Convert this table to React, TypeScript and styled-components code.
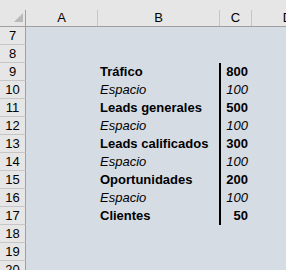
import styled, { createGlobalStyle } from "styled-components";

const GlobalStyle = createGlobalStyle`
  html, body {
    margin: 0;
    padding: 0;
    background: #d6dce4;
    overflow: hidden;
  }
  body {
    font-family: "Liberation Sans", Arial, sans-serif;
  }
`;

const Sheet = styled.div`
  display: grid;
  grid-template-columns: 26px 72px 122px 32px 72px;
  grid-template-rows: 27px;
  grid-auto-rows: 18px;
  width: 286px;
  height: 270px;
  overflow: hidden;
  background: #d6dce4;
  color: #000;
  font-size: 13px;
`;

const HeaderCell = styled.div`
  display: flex;
  align-items: flex-end;
  background: #e6e6e6;
  border-bottom: 1px solid #9f9f9f;
  padding-top: 10px;
`;

const HeaderLabel = styled.div<{ $last?: boolean; $dark?: boolean }>`
  flex: 1;
  height: 16px;
  line-height: 16px;
  text-align: center;
  border-right: 1px solid ${(p) => (p.$dark ? "#9f9f9f" : p.$last ? "transparent" : "#c6c6c6")};
  display: flex;
  align-items: center;
  justify-content: center;
`;

const CornerTriangle = styled.div`
  width: 0;
  height: 0;
  border-left: 9px solid transparent;
  border-bottom: 9px solid #b9b9b9;
  margin: 3px 2px 0 auto;
  align-self: flex-start;
`;

const RowHeader = styled.div`
  background: #e6e6e6;
  border-right: 1px solid #9f9f9f;
  border-bottom: 1px solid #c6c6c6;
  text-align: center;
  line-height: 17px;
`;

const Cell = styled.div<{ $bold?: boolean; $italic?: boolean; $num?: boolean; $edge?: boolean }>`
  line-height: 17px;
  white-space: nowrap;
  overflow: visible;
  font-weight: ${(p) => (p.$bold ? 700 : 400)};
  font-style: ${(p) => (p.$italic ? "italic" : "normal")};
  text-align: ${(p) => (p.$num ? "right" : "left")};
  padding: ${(p) => (p.$num ? "0 3px 0 0" : "0 0 0 2px")};
  border-right: 2px solid ${(p) => (p.$edge ? "#000" : "transparent")};
  margin-right: -1px;
`;

type Row = { label: string; value: string; bold: boolean };

const funnel: Row[] = [
  { label: "Tráfico", value: "800", bold: true },
  { label: "Espacio", value: "100", bold: false },
  { label: "Leads generales", value: "500", bold: true },
  { label: "Espacio", value: "100", bold: false },
  { label: "Leads calificados", value: "300", bold: true },
  { label: "Espacio", value: "100", bold: false },
  { label: "Oportunidades", value: "200", bold: true },
  { label: "Espacio", value: "100", bold: false },
  { label: "Clientes", value: "50", bold: true },
];

const rowNumbers = Array.from({ length: 14 }, (_, i) => i + 7);

const App = () => {
  return (
    <>
      <GlobalStyle />
      <Sheet>
        <HeaderCell>
          <HeaderLabel $dark>
            <CornerTriangle />
          </HeaderLabel>
        </HeaderCell>
        <HeaderCell>
          <HeaderLabel>A</HeaderLabel>
        </HeaderCell>
        <HeaderCell>
          <HeaderLabel>B</HeaderLabel>
        </HeaderCell>
        <HeaderCell>
          <HeaderLabel>C</HeaderLabel>
        </HeaderCell>
        <HeaderCell>
          <HeaderLabel $last>D</HeaderLabel>
        </HeaderCell>

        {rowNumbers.map((n) => {
          const item = n >= 9 ? funnel[n - 9] : undefined;
          return [
            <RowHeader key={`h${n}`}>{n}</RowHeader>,
            <Cell key={`a${n}`} />,
            <Cell key={`b${n}`} $bold={item?.bold} $italic={item && !item.bold} $edge={!!item}>
              {item?.label}
            </Cell>,
            <Cell key={`c${n}`} $num $bold={item?.bold} $italic={item && !item.bold}>
              {item?.value}
            </Cell>,
            <Cell key={`d${n}`} />,
          ];
        })}
      </Sheet>
    </>
  );
};

export default App;
